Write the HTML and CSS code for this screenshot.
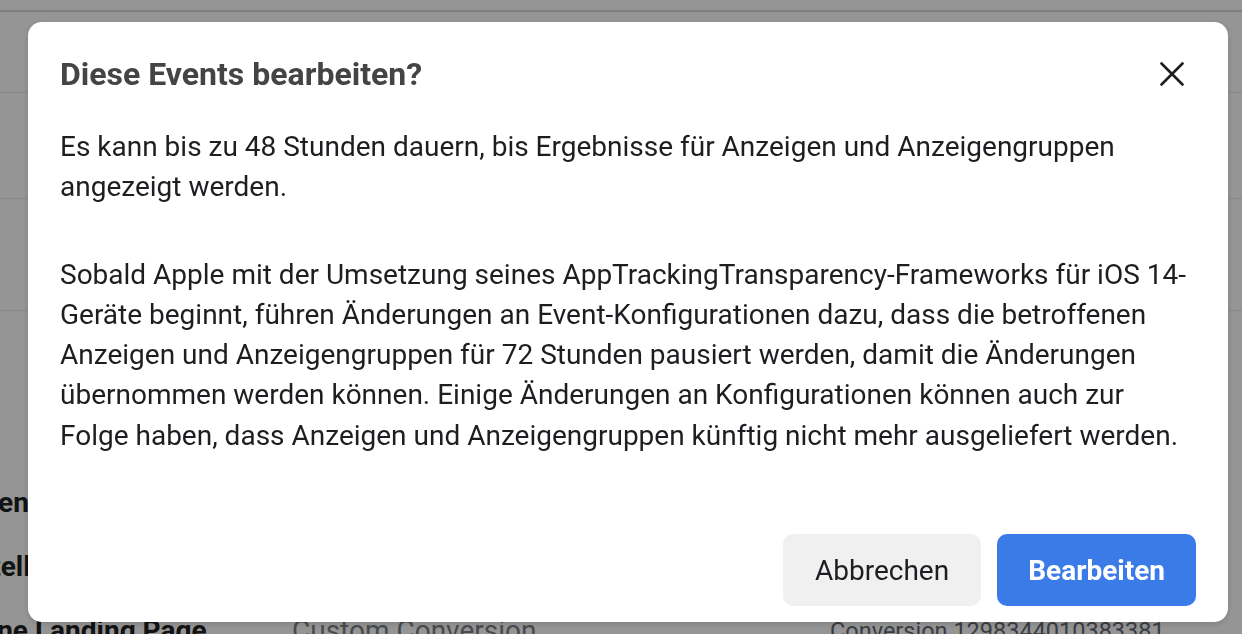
FILE: index.html
```html
<!DOCTYPE html>
<html lang="de">
<head>
  <meta charset="UTF-8" />
  <title>Diese Events bearbeiten?</title>
  <link rel="stylesheet" href="styles.css">
</head>
<body>
  <div class="page">
    <div class="topbar"></div>
    <div class="row row-a"></div>
    <div class="row row-b"></div>
    <div class="row row-c"></div>

    <div class="details">
      <div class="detail">
        <span class="label">Wenn Events</span>
        <span class="value"></span>
        <span class="value-id"></span>
      </div>
      <div class="detail">
        <span class="label">Stelle</span>
        <span class="value"></span>
        <span class="value-id"></span>
      </div>
      <div class="detail">
        <span class="label">Eine Landing Page</span>
        <span class="value">Custom Conversion</span>
        <span class="value-id">Conversion 1298344010383381</span>
      </div>
    </div>
  </div>

  <div class="backdrop">
    <div class="dialog" role="dialog" aria-labelledby="dialog-title">
      <div class="dialog-header">
        <h2 id="dialog-title">Diese Events bearbeiten?</h2>
        <button class="close" aria-label="Schließen">
          <svg width="24" height="24" viewBox="0 0 24 24">
            <path d="M1.5 1.5 L22.5 22.5 M22.5 1.5 L1.5 22.5" stroke="#1c1e21" stroke-width="2.6" stroke-linecap="round" fill="none"/>
          </svg>
        </button>
      </div>

      <div class="dialog-body">
        <p>Es kann bis zu 48 Stunden dauern, bis Ergebnisse für Anzeigen und Anzeigengruppen angezeigt werden.</p>
        <p>Sobald Apple mit der Umsetzung seines AppTrackingTransparency-Frameworks für iOS 14-Geräte beginnt, führen Änderungen an Event-Konfigurationen dazu, dass die betroffenen Anzeigen und Anzeigengruppen für 72 Stunden pausiert werden, damit die Änderungen übernommen werden können. Einige Änderungen an Konfigurationen können auch zur Folge haben, dass Anzeigen und Anzeigengruppen künftig nicht mehr ausgeliefert werden.</p>
      </div>

      <div class="dialog-footer">
        <button class="btn btn-cancel">Abbrechen</button>
        <button class="btn btn-primary">Bearbeiten</button>
      </div>
    </div>
  </div>
</body>
</html>
```

FILE: styles.css
```css
body {
  margin: 0;
  font-family: Roboto, "Liberation Sans", Arial, sans-serif;
  background: #f8f8f8;
  color: #1c1e21;
  overflow: hidden;
}

/* page behind the dialog */
.page {
  height: 634px;
  overflow: hidden;
}

.topbar {
  height: 10px;
  border-bottom: 2px solid #d4d4d4;
}

.row {
  border-bottom: 1px solid #e2e2e2;
}

.row-a { height: 80px; }
.row-b { height: 105px; }
.row-c { height: 111px; }

.details {
  padding-top: 176px;
  margin-left: -26px;
}

.detail {
  display: grid;
  grid-template-columns: 318px 538px 1fr;
  height: 64px;
  line-height: 32px;
  font-size: 28px;
}

.label {
  font-weight: bold;
  white-space: nowrap;
  color: #1c1e21;
}

.value {
  color: #7a7d82;
}

.value-id {
  font-size: 23.5px;
  color: #606770;
}

/* dialog */
.backdrop {
  position: fixed;
  inset: 0;
  background: rgba(0, 0, 0, 0.4);
  padding: 22px 0 0 28px;
}

.dialog {
  width: 1200px;
  height: 600px;
  background: #fff;
  border-radius: 14px;
  box-shadow: 0 2px 6px rgba(0, 0, 0, 0.15);
  display: flex;
  flex-direction: column;
  box-sizing: border-box;
  padding: 32px 32px 16px 32px;
}

.dialog-header {
  display: flex;
  align-items: center;
  justify-content: space-between;
  height: 40px;
}

.dialog-header h2 {
  margin: 0;
  font-size: 32px;
  line-height: 40px;
  font-weight: bold;
  color: #444444;
}

.close {
  width: 48px;
  height: 48px;
  border: none;
  background: none;
  padding: 0;
  display: flex;
  align-items: center;
  justify-content: center;
  cursor: pointer;
}

.dialog-body {
  padding-top: 33px;
  flex: 1;
}

.dialog-body p {
  margin: 0 0 47px;
  font-size: 28px;
  line-height: 40.25px;
  color: #1c1e21;
}

.dialog-footer {
  display: flex;
  justify-content: flex-end;
  gap: 16px;
}

.btn {
  height: 72px;
  padding: 0 32px;
  border: none;
  border-radius: 10px;
  font-family: inherit;
  font-size: 28px;
  cursor: pointer;
}

.btn-cancel {
  background: #f0f0f0;
  color: #1c1e21;
}

.btn-primary {
  padding: 0 31px;
  background: #3b7be8;
  color: #fff;
  font-weight: bold;
}
```
